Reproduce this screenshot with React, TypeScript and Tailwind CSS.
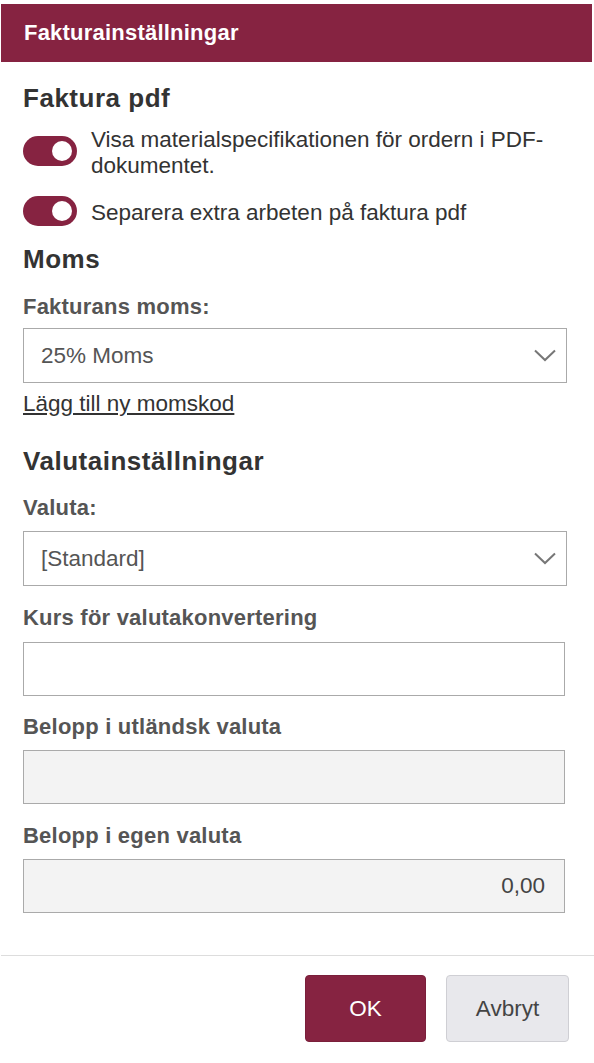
import React from 'react';

const FONT = "font-['Liberation_Sans',Arial,sans-serif]";

const Toggle: React.FC<{ className?: string }> = ({ className = '' }) => (
  <div className={`w-[54px] h-[30px] shrink-0 rounded-full bg-[#862341] flex items-center justify-end pr-[5px] ${className}`}>
    <div className="w-[20px] h-[20px] rounded-full bg-white" />
  </div>
);

const Heading: React.FC<{ className?: string; children: React.ReactNode }> = ({ className = '', children }) => (
  <h2 className={`text-[26px] leading-[30px] font-bold tracking-[0.02em] text-[#333] ${className}`}>{children}</h2>
);

const Label: React.FC<{ className?: string; children: React.ReactNode }> = ({ className = '', children }) => (
  <label className={`block text-[22px] leading-[26px] font-bold tracking-[0.01em] text-[#555] ${className}`}>{children}</label>
);

const Select: React.FC<{ className?: string; value: string }> = ({ className = '', value }) => (
  <div className={`w-[544px] h-[55px] border border-[#aaa] bg-white flex items-center justify-between pl-[17px] pr-[10px] ${className}`}>
    <span className="text-[22.5px] leading-[26px] text-[#555]">{value}</span>
    <svg width="22" height="13" viewBox="0 0 22 13" fill="none">
      <polyline points="1,1.5 11,11 21,1.5" stroke="#777" strokeWidth="2" />
    </svg>
  </div>
);

const Input: React.FC<{ className?: string; disabled?: boolean; value?: string }> = ({ className = '', disabled, value }) => (
  <div
    className={`w-[542px] h-[54px] border border-[#aaa] flex items-center justify-end pr-[19px] ${
      disabled ? 'bg-[#f3f3f3]' : 'bg-white'
    } ${className}`}
  >
    {value && <span className="text-[22.5px] leading-[26px] text-[#444]">{value}</span>}
  </div>
);

export default function App() {
  return (
    <div className={`min-h-screen bg-white ${FONT}`}>
      <div className="pt-[4px] pl-[1px] pr-[2px]">
        <header className="h-[58px] bg-[#862341] flex items-center pl-[23px]">
          <h1 className="text-white text-[22px] leading-[26px] font-bold tracking-[0.01em]">Fakturainställningar</h1>
        </header>
      </div>

      <div className="pl-[23px] pr-[27px] pt-[21px]">
        <Heading>Faktura pdf</Heading>
        <div className="mt-[14px] flex items-start gap-[14px]">
          <Toggle className="mt-[9px]" />
          <p className="text-[22.5px] leading-[26px] text-[#333]">
            Visa materialspecifikationen för ordern i PDF-dokumentet.
          </p>
        </div>
        <div className="mt-[17px] flex items-start gap-[14px]">
          <Toggle />
          <p className="mt-[4px] text-[22.5px] leading-[26px] text-[#333]">
            Separera extra arbeten på faktura pdf
          </p>
        </div>

        <Heading className="mt-[18px]">Moms</Heading>
        <Label className="mt-[20px]">Fakturans moms:</Label>
        <Select className="mt-[8px]" value="25% Moms" />
        <a href="#" className="mt-[8px] inline-block text-[22.5px] leading-[26px] text-[#333] underline">
          Lägg till ny momskod
        </a>

        <Heading className="mt-[28px]">Valutainställningar</Heading>
        <Label className="mt-[19px]">Valuta:</Label>
        <Select className="mt-[10px]" value="[Standard]" />

        <Label className="mt-[19px]">Kurs för valutakonvertering</Label>
        <Input className="mt-[11px]" />

        <Label className="mt-[18px]">Belopp i utländsk valuta</Label>
        <Input className="mt-[10px]" disabled />

        <Label className="mt-[19px]">Belopp i egen valuta</Label>
        <Input className="mt-[10px]" disabled value="0,00" />
      </div>

      <footer className="mt-[42px] ml-[1px] border-t border-[#ddd] pt-[19px] pr-[25px] flex justify-end gap-[20px]">
        <button className="w-[121px] h-[67px] rounded-[4px] bg-[#862341] border border-[#7a1f3b] text-white text-[22.5px]">
          OK
        </button>
        <button className="w-[123px] h-[67px] rounded-[4px] bg-[#e8e8ec] border border-[#cfcfd4] text-[#444] text-[22.5px]">
          Avbryt
        </button>
      </footer>
    </div>
  );
}
